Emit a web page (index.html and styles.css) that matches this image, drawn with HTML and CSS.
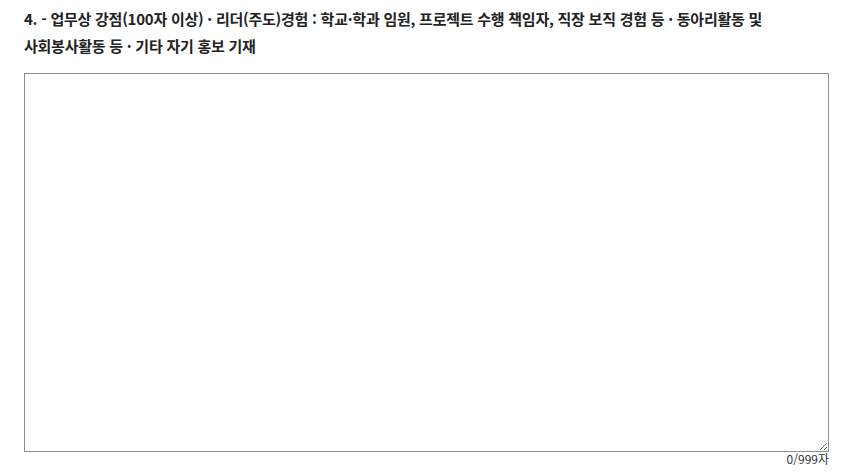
FILE: index.html
```html
<!DOCTYPE html>
<html lang="ko">
<head>
<meta charset="utf-8">
<link rel="stylesheet" href="styles.css">
</head>
<body>
<div class="question">
  <p class="title">4. - 업무상 강점(100자 이상) · 리더(주도)경험 : 학교·학과 임원, 프로젝트 수행 책임자, 직장 보직 경험 등 · 동아리활동 및 사회봉사활동 등 · 기타 자기 홍보 기재</p>
  <textarea class="answer"></textarea>
  <div class="counter">0/999자</div>
</div>
</body>
</html>
```
FILE: styles.css
```css
html, body {
  margin: 0;
  padding: 0;
  background: #ffffff;
}
.question {
  padding: 5px 27px 0 24px;
  font-family: "Noto Sans CJK KR", "Noto Sans", sans-serif;
  color: #222222;
}
.title {
  margin: 0;
  font-size: 15px;
  font-weight: 700;
  line-height: 27px;
  letter-spacing: -0.25px;
  word-spacing: 0;
  width: 790px;
  word-break: keep-all;
}
.answer {
  display: block;
  box-sizing: border-box;
  margin-top: 14px;
  width: 805px;
  height: 379px;
  border: 1px solid #8f8f8f;
  border-radius: 0;
  padding: 4px;
  resize: vertical;
}
.counter {
  width: 805px;
  text-align: right;
  font-size: 12px;
  line-height: 14px;
  color: #333333;
}
```
